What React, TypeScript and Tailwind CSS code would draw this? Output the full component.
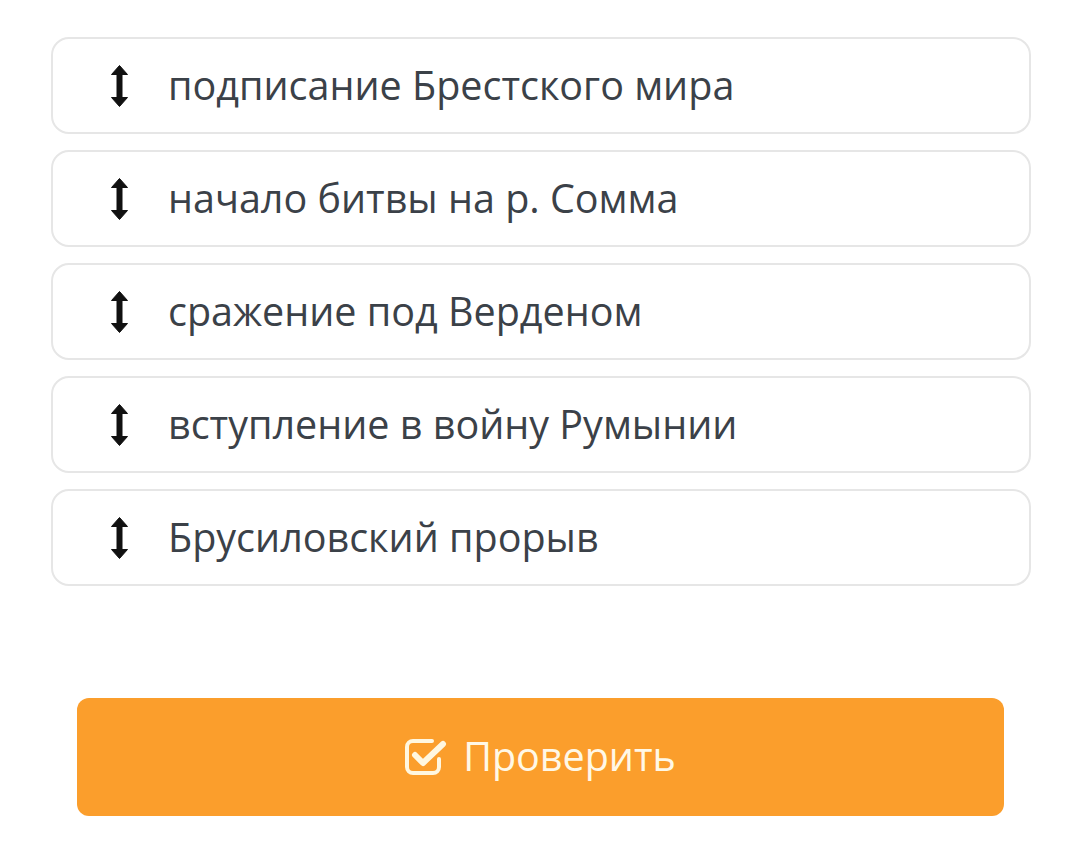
import React from "react";

const items = [
  "подписание Брестского мира",
  "начало битвы на р. Сомма",
  "сражение под Верденом",
  "вступление в войну Румынии",
  "Брусиловский прорыв",
];

const ArrowsV = () => (
  <svg width="17" height="42" viewBox="0 0 17 42" className="shrink-0">
    <path d="M8.5 0.5 L16.5 9.5 H11 V32.5 H16.5 L8.5 41.5 L0.5 32.5 H6 V9.5 H0.5 Z" fill="#111" stroke="#111" strokeWidth="1" strokeLinejoin="round" />
  </svg>
);

const CheckSquare = () => (
  <svg width="44" height="40" viewBox="0 0 44 40" className="shrink-0">
    <path d="M34 22 V30 A6 6 0 0 1 28 36 H8 A6 6 0 0 1 2 30 V10 A6 6 0 0 1 8 4 H27" fill="none" stroke="#fff7e0" strokeWidth="4" strokeLinecap="round" />
    <path d="M10 18 L18 26 L38 7" fill="none" stroke="#fff7e0" strokeWidth="6" strokeLinecap="round" strokeLinejoin="round" />
  </svg>
);

export default function App() {
  return (
    <div className="min-h-screen bg-white pt-[37px] font-['Open_Sans',sans-serif]">
      <div className="ml-[51px] mr-[49px] flex flex-col gap-[16px]">
        {items.map((t) => (
          <div
            key={t}
            className="h-[97px] flex items-center rounded-[18px] border-2 border-[#e6e6e6] bg-white pl-[58px]"
          >
            <ArrowsV />
            <span className="ml-[40px] text-[39.5px] text-[#3b4148] leading-none">{t}</span>
          </div>
        ))}
      </div>
      <div className="ml-[77px] mr-[76px] mt-[112px]">
        <button className="w-full h-[118px] rounded-[12px] bg-[#fb9e2c] flex items-center justify-center gap-[14px] text-[#fff8e6] text-[39.5px]">
          <CheckSquare />
          <span className="leading-none">Проверить</span>
        </button>
      </div>
    </div>
  );
}
